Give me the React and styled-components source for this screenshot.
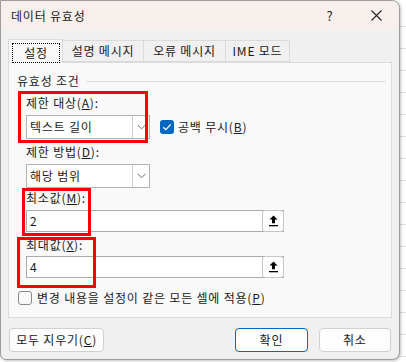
import React from 'react'
import styled, { createGlobalStyle } from 'styled-components'

const GlobalStyle = createGlobalStyle`
    html, body {
        margin: 0;
        padding: 0;
    }

    body {
        width: 406px;
        height: 362px;
        overflow: hidden;
        font-family: "Noto Sans CJK KR", "Noto Sans", sans-serif;
        font-size: 12px;
        letter-spacing: 0.8px;
        color: #1a1a1a;
        background-color: #ffffff;
        background-image: repeating-linear-gradient(
            to bottom,
            transparent 0,
            transparent 21px,
            #e2e2e2 21px,
            #e2e2e2 22px
        );
        background-position: 0 5px;
    }
`

const Dialog = styled.div`
    position: relative;
    width: 400px;
    height: 360px;
    box-sizing: border-box;
    border: 1px solid #9c9c9c;
    border-radius: 0 8px 8px 6px;
    background: #f0f0f0;
    box-shadow: 1px 1px 3px rgba(0, 0, 0, 0.25);
    display: flex;
    flex-direction: column;
    overflow: hidden;
`

const TitleBar = styled.div`
    height: 29px;
    flex: none;
    display: flex;
    align-items: center;
    background: #f7efec;
    padding-left: 10px;
`

const Title = styled.div`
    flex: 1;
    font-size: 12px;
    line-height: 16px;
    margin-top: 1px;
`

const TitleButton = styled.div`
    width: 46px;
    display: flex;
    justify-content: center;
    align-items: center;
    font-size: 13px;
    line-height: 16px;
    color: #222;
`

const Body = styled.div`
    flex: 1;
    display: flex;
    flex-direction: column;
    padding: 10px 8px 0 7px;
`

const Tabs = styled.div`
    display: flex;
    height: 22px;
    position: relative;
    z-index: 1;
`

const Tab = styled.div`
    box-sizing: border-box;
    height: ${p => (p.$active ? '24px' : '22px')};
    margin-top: ${p => (p.$active ? '-1px' : '0')};
    width: ${p => p.$w}px;
    display: flex;
    align-items: center;
    justify-content: center;
    border: 1px solid #dadada;
    border-bottom: ${p => (p.$active ? 'none' : '1px solid #dadada')};
    margin-left: ${p => (p.$active ? '0' : '-1px')};
    background: ${p => (p.$active ? '#f9f9f9' : '#f0f0f0')};
    font-size: 12px;
    line-height: 16px;
    white-space: nowrap;
`

const FocusLabel = styled.span`
    outline: 1px dotted #000;
    outline-offset: 0;
    padding: 1px 4px 1px 5px;
    margin-top: 2px;
    width: 37px;
    text-align: center;
`

const Panel = styled.div`
    box-sizing: border-box;
    width: 384px;
    height: 256px;
    background: #f9f9f9;
    border: 1px solid #dcdcdc;
    display: flex;
    flex-direction: column;
    padding: 10px 0 0 0;
`

const GroupHeader = styled.div`
    display: flex;
    align-items: center;
    padding-left: 8px;
    line-height: 16px;
    height: 16px;

    &::after {
        content: '';
        flex: 1;
        height: 1px;
        background: #dcdcdc;
        margin: 1px 5px 0 6px;
    }
`

const GroupBody = styled.div`
    display: flex;
    flex-direction: column;
    padding-left: 17px;
`

const FieldLabel = styled.div`
    line-height: 16px;
    height: 16px;
    margin-top: ${p => p.$mt}px;
`

const Row = styled.div`
    display: flex;
    align-items: center;
    margin-top: ${p => p.$mt}px;
`

const Combo = styled.div`
    box-sizing: border-box;
    width: 124px;
    height: 24px;
    background: #fff;
    border: 1px solid #b3b3b3;
    display: flex;
    align-items: center;
`

const ComboText = styled.div`
    flex: 1;
    padding-left: 3px;
    line-height: 16px;
`

const ComboArrow = styled.div`
    width: 16px;
    height: 100%;
    border-left: 1px solid #cfcfcf;
    display: flex;
    align-items: center;
    justify-content: center;
`

const Check = styled.span`
    box-sizing: border-box;
    width: 14px;
    height: 14px;
    border-radius: 3px;
    display: inline-flex;
    align-items: center;
    justify-content: center;
    background: ${p => (p.$checked ? '#0067c0' : 'transparent')};
    border: ${p => (p.$checked ? 'none' : '1px solid #8a8a8a')};
    flex: none;
`

const CheckText = styled.span`
    margin-left: ${p => p.$ml}px;
    line-height: 16px;
    white-space: nowrap;
`

const Input = styled.div`
    box-sizing: border-box;
    width: 258px;
    height: 22px;
    background: #fff;
    border: 1px solid #ababab;
    display: flex;
    align-items: center;
`

const InputText = styled.div`
    flex: 1;
    padding-left: 3px;
    line-height: 16px;
`

const PickButton = styled.div`
    box-sizing: border-box;
    width: 22px;
    height: 22px;
    margin: 0 -1px 0 0;
    border: 1px solid #c6c6c6;
    border-radius: 3px;
    background: #fff;
    display: flex;
    align-items: center;
    justify-content: center;
`

const ApplyRow = styled.div`
    display: flex;
    align-items: center;
    padding-left: 9px;
    margin-top: 12px;
`

const Footer = styled.div`
    display: flex;
    align-items: center;
    margin-top: 10px;
    padding-left: 1px;
`

const Button = styled.div`
    box-sizing: border-box;
    width: ${p => p.$w}px;
    height: 24px;
    margin-left: ${p => p.$ml || 0}px;
    border: 1px solid ${p => (p.$primary ? '#0067c0' : '#d0d0d0')};
    border-radius: 4px;
    background: #fdfdfd;
    display: flex;
    align-items: center;
    justify-content: center;
    line-height: 16px;
    white-space: nowrap;
`

const Marker = styled.div`
    position: absolute;
    box-sizing: border-box;
    border: 3px solid #ff0000;
    pointer-events: none;
`

const Key = styled.span`
    text-decoration: underline;
    text-underline-offset: 1px;
`

const Chevron = () => (
    <svg width="9" height="6" viewBox="0 0 9 6">
        <path d="M0.5 0.8 L4.5 4.8 L8.5 0.8" fill="none" stroke="#6b6b6b" strokeWidth="1" />
    </svg>
)

const Tick = () => (
    <svg width="10" height="8" viewBox="0 0 10 8">
        <path d="M1.3 4.2 L3.8 6.6 L8.7 1.4" fill="none" stroke="#fff" strokeWidth="1.3" />
    </svg>
)

const CollapseIcon = () => (
    <svg width="9" height="12" viewBox="0 0 9 12">
        <polygon points="4.5,0.5 8.5,4.5 6,4.5 6,8.3 3,8.3 3,4.5 0.5,4.5" fill="#000" />
        <rect x="0" y="10" width="9" height="1.3" fill="#000" />
    </svg>
)

const CloseIcon = () => (
    <svg width="11" height="11" viewBox="0 0 11 11">
        <path d="M0.5 0.5 L10.5 10.5 M10.5 0.5 L0.5 10.5" stroke="#222" strokeWidth="1.1" />
    </svg>
)

export default function App() {
    return (
        <>
            <GlobalStyle />
            <Dialog>
                <TitleBar>
                    <Title>데이터 유효성</Title>
                    <TitleButton>?</TitleButton>
                    <TitleButton>
                        <CloseIcon />
                    </TitleButton>
                </TitleBar>
                <Body>
                    <Tabs>
                        <Tab $active $w={55}>
                            <FocusLabel>설정</FocusLabel>
                        </Tab>
                        <Tab $w={82}>설명 메시지</Tab>
                        <Tab $w={83}>오류 메시지</Tab>
                        <Tab $w={65}>IME 모드</Tab>
                    </Tabs>
                    <Panel>
                        <GroupHeader>유효성 조건</GroupHeader>
                        <GroupBody>
                            <FieldLabel $mt={6}>
                                제한 대상(<Key>A</Key>):
                            </FieldLabel>
                            <Row $mt={4}>
                                <Combo>
                                    <ComboText>텍스트 길이</ComboText>
                                    <ComboArrow>
                                        <Chevron />
                                    </ComboArrow>
                                </Combo>
                                <Check $checked style={{ marginLeft: 10 }}>
                                    <Tick />
                                </Check>
                                <CheckText $ml={4}>
                                    공백 무시(<Key>B</Key>)
                                </CheckText>
                            </Row>
                            <FieldLabel $mt={5}>
                                제한 방법(<Key>D</Key>):
                            </FieldLabel>
                            <Row $mt={4}>
                                <Combo>
                                    <ComboText>해당 범위</ComboText>
                                    <ComboArrow>
                                        <Chevron />
                                    </ComboArrow>
                                </Combo>
                            </Row>
                            <FieldLabel $mt={2}>
                                최소값(<Key>M</Key>):
                            </FieldLabel>
                            <Row $mt={4}>
                                <Input>
                                    <InputText>2</InputText>
                                    <PickButton>
                                        <CollapseIcon />
                                    </PickButton>
                                </Input>
                            </Row>
                            <FieldLabel $mt={5}>
                                최대값(<Key>X</Key>):
                            </FieldLabel>
                            <Row $mt={3}>
                                <Input>
                                    <InputText>4</InputText>
                                    <PickButton>
                                        <CollapseIcon />
                                    </PickButton>
                                </Input>
                            </Row>
                        </GroupBody>
                        <ApplyRow>
                            <Check />
                            <CheckText $ml={5}>
                                변경 내용을 설정이 같은 모든 셀에 적용(<Key>P</Key>)
                            </CheckText>
                        </ApplyRow>
                    </Panel>
                    <Footer>
                        <Button $w={96}>
                            모두 지우기(<Key>C</Key>)
                        </Button>
                        <Button $w={73} $ml={131} $primary>
                            확인
                        </Button>
                        <Button $w={73} $ml={11}>
                            취소
                        </Button>
                    </Footer>
                </Body>
                <Marker style={{ left: 17, top: 90, width: 130, height: 52 }} />
                <Marker style={{ left: 21, top: 187, width: 69, height: 48 }} />
                <Marker style={{ left: 16, top: 236, width: 79, height: 51 }} />
            </Dialog>
        </>
    )
}
